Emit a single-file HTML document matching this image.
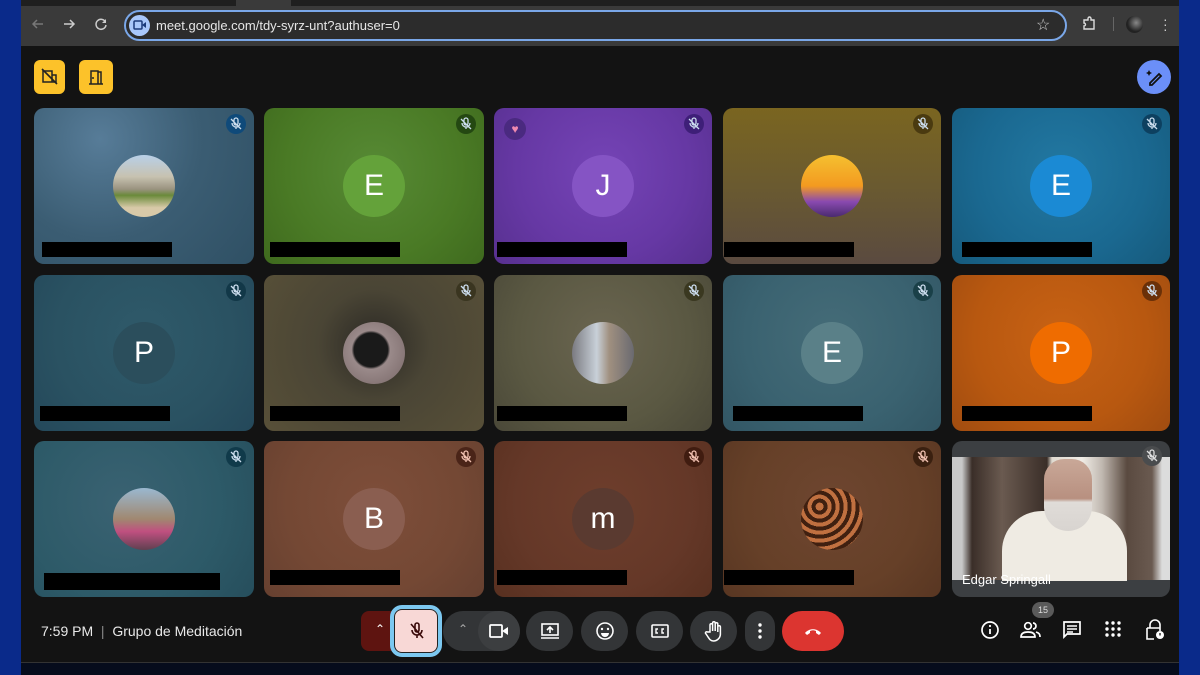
<!DOCTYPE html>
<html><head><meta charset="utf-8"><style>
*{margin:0;padding:0;box-sizing:border-box}
body{width:1200px;height:675px;background:#0a2a8a;font-family:"Liberation Sans",sans-serif;overflow:hidden;position:relative}
.win{position:absolute;left:21px;top:0;width:1158px;height:662px;background:#131313}
.chrome{position:absolute;left:0;top:0;width:1158px;height:46px;background:#3a3a3a}
.tabtop{position:absolute;top:0;height:6px;background:#1f1f1f}
.url{position:absolute;left:103px;top:10px;width:943px;height:31px;border:2px solid #7aa7e8;border-radius:16px;background:#2c2c2c}
.url span{position:absolute;left:30px;top:6px;color:#e6e6e6;font-size:13px}
.tile{position:absolute;width:220px;height:156px;border-radius:10px;overflow:hidden}
.av{position:absolute;left:79px;top:47px;width:62px;height:62px;border-radius:50%;color:#fff;font-size:30px;text-align:center;line-height:62px}
.nm{position:absolute;left:8px;top:134px;width:130px;height:15px;background:#000}
.mic{position:absolute;right:8px;top:6px;width:20px;height:20px;border-radius:50%}
.mic svg{position:absolute;left:3px;top:3px;width:14px;height:14px}
.btn{position:absolute;top:611px;height:40px;border-radius:20px;background:#333537}
.btn svg{position:absolute;left:50%;top:50%;transform:translate(-50%,-50%)}
.ri{position:absolute;top:620px}
</style></head><body>
<div class="win">
<div class="chrome">
<div class="tabtop" style="left:0;width:215px"></div>
<div class="tabtop" style="left:270px;width:888px"></div>
<svg style="position:absolute;left:10px;top:17px" width="14" height="14" viewBox="0 0 14 14"><path d="M12 7H2M6 3L2 7l4 4" stroke="#777" stroke-width="1.5" fill="none"/></svg>
<svg style="position:absolute;left:41px;top:17px" width="14" height="14" viewBox="0 0 14 14"><path d="M2 7h10M8 3l4 4-4 4" stroke="#ccc" stroke-width="1.5" fill="none"/></svg>
<svg style="position:absolute;left:73px;top:17px" width="14" height="14" viewBox="0 0 14 14"><path d="M11.5 5A5 5 0 1 0 12 8" stroke="#ccc" stroke-width="1.5" fill="none"/><path d="M12 2v4H8" fill="#ccc"/></svg>
<div class="url"><div style="position:absolute;left:3px;top:3px;width:21px;height:21px;border-radius:50%;background:#a8c7fa"></div><svg style="position:absolute;left:7px;top:8px" width="13" height="10"><rect x="1" y="1" width="8" height="8" rx="1" stroke="#1a3a7a" stroke-width="1.5" fill="none"/><path d="M9 5l4-3v6z" fill="#1a3a7a"/></svg><span>meet.google.com/tdy-syrz-unt?authuser=0</span>
<span style="left:910px;top:3px;font-size:16px;color:#ccc">☆</span></div>
<svg style="position:absolute;left:1060px;top:16px" width="16" height="16" viewBox="0 0 16 16"><path d="M3 4h4V2.5a1.5 1.5 0 0 1 3 0V4h3v9H3v-3a1.5 1.5 0 0 0 0-3z" stroke="#ddd" stroke-width="1.4" fill="none"/></svg>
<div style="position:absolute;left:1092px;top:17px;width:1px;height:14px;background:#666"></div>
<div style="position:absolute;left:1105px;top:16px;width:17px;height:17px;border-radius:50%;background:radial-gradient(circle at 60% 40%,#888,#222 60%)"></div>
<div style="position:absolute;left:1142px;top:17px;color:#ccc;font-size:14px;line-height:5px;width:4px">·<br>·<br>·</div>
</div>
<div style="position:absolute;left:13px;top:60px;width:31px;height:34px;border-radius:6px;background:#fcc22a"></div>
<svg style="position:absolute;left:20px;top:68px" width="17" height="17" viewBox="0 0 17 17"><path d="M2 3h9v11H2zM11 7h4v7h-4" stroke="#222" stroke-width="1.5" fill="none"/><path d="M1 1l15 15" stroke="#222" stroke-width="1.6"/></svg>
<div style="position:absolute;left:58px;top:60px;width:34px;height:34px;border-radius:6px;background:#fcc22a"></div>
<svg style="position:absolute;left:66px;top:68px" width="18" height="18" viewBox="0 0 18 18"><path d="M4 16V3h7v13M11 4h3v12M2 16h14M6 9v2" stroke="#222" stroke-width="1.5" fill="none"/></svg>
<div style="position:absolute;left:1116px;top:60px;width:34px;height:34px;border-radius:50%;background:#6b8ff8"></div>
<svg style="position:absolute;left:1123px;top:67px" width="20" height="20" viewBox="0 0 20 20"><path d="M6 16l9-9 2 2-9 9H6z" stroke="#111" stroke-width="1.8" fill="none"/><path d="M5 3l1 2 2 1-2 1-1 2-1-2-2-1 2-1z" fill="#111"/></svg>
</div>

<div class="tile" style="left:34px;top:108px;background:radial-gradient(circle at 30% 20%,#577c98,#3b5d73 50%,#2f5064)"><div class="av" style="background:linear-gradient(#b8d0e8 0,#c7c2b0 35%,#9a9380 55%,#6a8a3a 65%,#d8c9a8 85%)"></div><div class="nm"></div><div class="mic" style="background:#0f4a7a"><svg viewBox="0 0 14 14"><path d="M5 3a2 2 0 0 1 4 0v3a2 2 0 0 1-4 0zM3 6a4 4 0 0 0 8 0M7 10v2M2 2l10 10" stroke="#cde" stroke-width="1.3" fill="none"/></svg></div></div>
<div class="tile" style="left:264px;top:108px;background:radial-gradient(circle at 50% 40%,#578a35,#4a7a25 60%,#3f6a1e)"><div class="av" style="background:#64a23a">E</div><div class="nm" style="left:6px"></div><div class="mic" style="background:#244812"><svg viewBox="0 0 14 14"><path d="M5 3a2 2 0 0 1 4 0v3a2 2 0 0 1-4 0zM3 6a4 4 0 0 0 8 0M7 10v2M2 2l10 10" stroke="#cde" stroke-width="1.3" fill="none"/></svg></div></div>
<div class="tile" style="left:494px;top:108px;width:218px;background:radial-gradient(circle at 50% 40%,#7544b6,#6638a4 60%,#57308f)"><div class="av" style="left:78px;background:#8554c4">J</div><div class="nm" style="left:3px"></div><div class="mic" style="background:#3e1f78"><svg viewBox="0 0 14 14"><path d="M5 3a2 2 0 0 1 4 0v3a2 2 0 0 1-4 0zM3 6a4 4 0 0 0 8 0M7 10v2M2 2l10 10" stroke="#cde" stroke-width="1.3" fill="none"/></svg></div><div style="position:absolute;left:10px;top:10px;width:22px;height:22px;border-radius:50%;background:#4a2a80;color:#f08ab0;font-size:12px;text-align:center;line-height:22px">♥</div></div>
<div class="tile" style="left:723px;top:108px;width:218px;background:linear-gradient(#7a6520,#6a5a30 50%,#5a4a40)"><div class="av" style="left:78px;background:linear-gradient(#f5c030 0,#f39a20 50%,#8a4ab0 75%,#4a2a70)"></div><div class="nm" style="left:1px"></div><div class="mic" style="background:#4a3a10"><svg viewBox="0 0 14 14"><path d="M5 3a2 2 0 0 1 4 0v3a2 2 0 0 1-4 0zM3 6a4 4 0 0 0 8 0M7 10v2M2 2l10 10" stroke="#cde" stroke-width="1.3" fill="none"/></svg></div></div>
<div class="tile" style="left:952px;top:108px;width:218px;background:radial-gradient(circle at 50% 40%,#2278a2,#1a6890 60%,#165a7c)"><div class="av" style="left:78px;background:#1b8ad4">E</div><div class="nm" style="left:10px"></div><div class="mic" style="background:#0d4060"><svg viewBox="0 0 14 14"><path d="M5 3a2 2 0 0 1 4 0v3a2 2 0 0 1-4 0zM3 6a4 4 0 0 0 8 0M7 10v2M2 2l10 10" stroke="#cde" stroke-width="1.3" fill="none"/></svg></div></div>

<div class="tile" style="left:34px;top:275px;background:radial-gradient(circle at 50% 40%,#2f5a6a,#2a5262 60%,#24485a)"><div class="av" style="background:#2b4e5c">P</div><div class="nm" style="left:6px;top:131px"></div><div class="mic" style="background:#123848"><svg viewBox="0 0 14 14"><path d="M5 3a2 2 0 0 1 4 0v3a2 2 0 0 1-4 0zM3 6a4 4 0 0 0 8 0M7 10v2M2 2l10 10" stroke="#cde" stroke-width="1.3" fill="none"/></svg></div></div>
<div class="tile" style="left:264px;top:275px;background:radial-gradient(circle at 50% 45%,#2a2824,#4a4535 40%,#585038)"><div class="av" style="background:radial-gradient(circle at 45% 45%,#1a1a1a 35%,#9a8a8a 40%,#766)"></div><div class="nm" style="left:6px;top:131px"></div><div class="mic" style="background:#3a3520"><svg viewBox="0 0 14 14"><path d="M5 3a2 2 0 0 1 4 0v3a2 2 0 0 1-4 0zM3 6a4 4 0 0 0 8 0M7 10v2M2 2l10 10" stroke="#cde" stroke-width="1.3" fill="none"/></svg></div></div>
<div class="tile" style="left:494px;top:275px;width:218px;background:radial-gradient(circle at 50% 40%,#6a6550,#5a5842 60%,#4a4838)"><div class="av" style="left:78px;background:linear-gradient(90deg,#7a7a80,#c8d0d8 40%,#a09080 60%,#6a6a70)"></div><div class="nm" style="left:3px;top:131px"></div><div class="mic" style="background:#3a3820"><svg viewBox="0 0 14 14"><path d="M5 3a2 2 0 0 1 4 0v3a2 2 0 0 1-4 0zM3 6a4 4 0 0 0 8 0M7 10v2M2 2l10 10" stroke="#cde" stroke-width="1.3" fill="none"/></svg></div></div>
<div class="tile" style="left:723px;top:275px;width:218px;background:radial-gradient(circle at 50% 40%,#456c78,#3a6270 60%,#325664)"><div class="av" style="left:78px;background:#5a8088">E</div><div class="nm" style="left:10px;top:131px"></div><div class="mic" style="background:#1a4048"><svg viewBox="0 0 14 14"><path d="M5 3a2 2 0 0 1 4 0v3a2 2 0 0 1-4 0zM3 6a4 4 0 0 0 8 0M7 10v2M2 2l10 10" stroke="#cde" stroke-width="1.3" fill="none"/></svg></div></div>
<div class="tile" style="left:952px;top:275px;width:218px;background:radial-gradient(circle at 50% 40%,#c86214,#b85810 60%,#a04c10)"><div class="av" style="left:78px;background:#ef6c00">P</div><div class="nm" style="left:10px;top:131px"></div><div class="mic" style="background:#6a3008"><svg viewBox="0 0 14 14"><path d="M5 3a2 2 0 0 1 4 0v3a2 2 0 0 1-4 0zM3 6a4 4 0 0 0 8 0M7 10v2M2 2l10 10" stroke="#cde" stroke-width="1.3" fill="none"/></svg></div></div>

<div class="tile" style="left:34px;top:441px;background:radial-gradient(circle at 40% 40%,#3a6272,#2d5a68 60%,#264e5c)"><div class="av" style="background:linear-gradient(#9ab8d0,#a08870 50%,#c05080 70%,#604050)"></div><div class="nm" style="left:10px;top:132px;width:176px;height:17px"></div><div class="mic" style="background:#103a4a"><svg viewBox="0 0 14 14"><path d="M5 3a2 2 0 0 1 4 0v3a2 2 0 0 1-4 0zM3 6a4 4 0 0 0 8 0M7 10v2M2 2l10 10" stroke="#cde" stroke-width="1.3" fill="none"/></svg></div></div>
<div class="tile" style="left:264px;top:441px;background:radial-gradient(circle at 50% 40%,#7e4e3a,#744834 60%,#664030)"><div class="av" style="background:#8a5e50">B</div><div class="nm" style="left:6px;top:129px"></div><div class="mic" style="background:#4a2418"><svg viewBox="0 0 14 14"><path d="M5 3a2 2 0 0 1 4 0v3a2 2 0 0 1-4 0zM3 6a4 4 0 0 0 8 0M7 10v2M2 2l10 10" stroke="#f0c0b0" stroke-width="1.3" fill="none"/></svg></div></div>
<div class="tile" style="left:494px;top:441px;width:218px;background:radial-gradient(circle at 50% 40%,#6e3e2c,#653828 60%,#583020)"><div class="av" style="left:78px;background:#5a3a30">m</div><div class="nm" style="left:3px;top:129px"></div><div class="mic" style="background:#401c10"><svg viewBox="0 0 14 14"><path d="M5 3a2 2 0 0 1 4 0v3a2 2 0 0 1-4 0zM3 6a4 4 0 0 0 8 0M7 10v2M2 2l10 10" stroke="#f0c0b0" stroke-width="1.3" fill="none"/></svg></div></div>
<div class="tile" style="left:723px;top:441px;width:218px;background:radial-gradient(circle at 50% 40%,#6e4630,#664028 60%,#583622)"><div class="av" style="left:78px;background:repeating-radial-gradient(circle at 30% 30%,#c07040 0 4px,#402010 4px 8px)"></div><div class="nm" style="left:1px;top:129px"></div><div class="mic" style="background:#3a2010"><svg viewBox="0 0 14 14"><path d="M5 3a2 2 0 0 1 4 0v3a2 2 0 0 1-4 0zM3 6a4 4 0 0 0 8 0M7 10v2M2 2l10 10" stroke="#f0c0b0" stroke-width="1.3" fill="none"/></svg></div></div>
<div class="tile" style="left:952px;top:441px;width:218px;background:#3c3f42"><div style="position:absolute;left:0;top:16px;width:218px;height:123px;background:linear-gradient(90deg,#c8c8c8 0,#c8c8c8 10px,#3a2e28 20px,#6a5a50 50px,#3a2e28 95px,#e0dad0 100px,#f0ece6 130px,#c0b8b0 150px,#5a4a40 175px,#6a5a50 200px,#dcdcdc 210px)"></div>
<div style="position:absolute;left:50px;top:70px;width:125px;height:70px;border-radius:40px 40px 0 0;background:#efebe3"></div>
<div style="position:absolute;left:92px;top:18px;width:48px;height:72px;border-radius:22px 22px 26px 26px;background:linear-gradient(#c9a898 0,#b89080 55%,#e0dcd8 60%,#d8d4d0)"></div>
<div style="position:absolute;left:10px;top:131px;color:#fff;font-size:13px">Edgar Springall</div><div class="mic" style="background:#4a4c4e;top:5px"><svg viewBox="0 0 14 14"><path d="M5 3a2 2 0 0 1 4 0v3a2 2 0 0 1-4 0zM3 6a4 4 0 0 0 8 0M7 10v2M2 2l10 10" stroke="#ddd" stroke-width="1.3" fill="none"/></svg></div></div>

<div style="position:absolute;left:41px;top:623px;color:#e8e8e8;font-size:14px">7:59 PM &nbsp;<span style="color:#888">|</span>&nbsp; Grupo de Meditación</div>
<div style="position:absolute;left:361px;top:611px;width:50px;height:40px;border-radius:8px;background:#5e1410"></div>
<div style="position:absolute;left:375px;top:622px;color:#fff;font-size:12px">⌃</div>
<div style="position:absolute;left:390px;top:605px;width:52px;height:52px;border-radius:12px;border:4px solid #7cc8f0;background:#f8d8d6"><div style="position:absolute;inset:0;border:1.5px solid #222;border-radius:8px"></div>
<svg style="position:absolute;left:13px;top:12px" width="20" height="20" viewBox="0 0 20 20"><path d="M8 4a2 2 0 0 1 4 0v5a2 2 0 0 1-4 0zM5 9a5 5 0 0 0 10 0M10 14v3M4 3l12 14" stroke="#3a0a0a" stroke-width="1.6" fill="none"/></svg></div>
<div class="btn" style="left:443px;width:77px"></div>
<div style="position:absolute;left:458px;top:622px;color:#aaa;font-size:12px">⌃</div>
<div class="btn" style="left:478px;width:42px;background:#3c3e40"><svg width="20" height="16" viewBox="0 0 20 16"><rect x="1" y="2" width="12" height="12" rx="1" stroke="#fff" stroke-width="1.8" fill="none"/><path d="M13 8l6-4v8z" fill="#fff"/></svg></div>
<div class="btn" style="left:526px;width:47px"><svg width="20" height="18" viewBox="0 0 20 18"><rect x="2" y="2" width="16" height="11" stroke="#fff" stroke-width="1.6" fill="none"/><path d="M10 11V5M7 8l3-3 3 3M1 16h18" stroke="#fff" stroke-width="1.6" fill="none"/></svg></div>
<div class="btn" style="left:581px;width:47px"><svg width="20" height="20" viewBox="0 0 20 20"><circle cx="10" cy="10" r="8" stroke="#fff" stroke-width="1.6" fill="none"/><circle cx="7" cy="8" r="1.2" fill="#fff"/><circle cx="13" cy="8" r="1.2" fill="#fff"/><path d="M6 12a4 4 0 0 0 8 0z" fill="#fff"/></svg></div>
<div class="btn" style="left:636px;width:47px"><svg width="18" height="16" viewBox="0 0 18 16"><rect x="1" y="2" width="16" height="12" rx="1" stroke="#fff" stroke-width="1.6" fill="none"/><path d="M7 6H5v4h2M13 6h-2v4h2" stroke="#fff" stroke-width="1.4" fill="none"/></svg></div>
<div class="btn" style="left:690px;width:47px"><svg width="20" height="22" viewBox="0 0 20 22"><path d="M6 12V5a1.3 1.3 0 0 1 2.6 0v6V3a1.3 1.3 0 0 1 2.6 0v8V4a1.3 1.3 0 0 1 2.6 0v8V7a1.3 1.3 0 0 1 2.6 0v7a7 7 0 0 1-7 7c-3 0-4-2-6-5l-2-3a1.3 1.3 0 0 1 2-1z" stroke="#fff" stroke-width="1.5" fill="none"/></svg></div>
<div class="btn" style="left:745px;width:30px"><svg width="4" height="16"><circle cx="2" cy="2" r="1.7" fill="#fff"/><circle cx="2" cy="8" r="1.7" fill="#fff"/><circle cx="2" cy="14" r="1.7" fill="#fff"/></svg></div>
<div class="btn" style="left:782px;width:62px;background:#dc3530"><svg width="20" height="10" viewBox="0 0 20 10"><path d="M2 7c4-5 12-5 16 0l-2 2-3-2V5c-2-1-4-1-6 0v2l-3 2z" fill="#fff"/></svg></div>

<svg class="ri" style="left:980px" width="20" height="20" viewBox="0 0 20 20"><circle cx="10" cy="10" r="8" stroke="#fff" stroke-width="1.7" fill="none"/><path d="M10 9v5" stroke="#fff" stroke-width="1.8"/><circle cx="10" cy="6" r="1.1" fill="#fff"/></svg>
<div style="position:absolute;left:1032px;top:602px;width:22px;height:16px;border-radius:8px;background:#5a5a5a;color:#ddd;font-size:9px;text-align:center;line-height:16px">15</div>
<svg class="ri" style="left:1020px" width="22" height="20" viewBox="0 0 22 20"><circle cx="8" cy="6" r="3.3" stroke="#fff" stroke-width="1.7" fill="none"/><path d="M1 17c0-4 3-5 7-5s7 1 7 5zM13 3a3 3 0 0 1 0 6M16 12c3 1 4 2 4 5" stroke="#fff" stroke-width="1.7" fill="none"/></svg>
<svg class="ri" style="left:1062px" width="20" height="20" viewBox="0 0 20 20"><path d="M2 2h16v12H5l-3 3z" stroke="#fff" stroke-width="1.7" fill="none"/><path d="M5 6h10M5 9h10M5 12h6" stroke="#fff" stroke-width="1.5"/></svg>
<svg class="ri" style="left:1104px" width="18" height="18" viewBox="0 0 18 18"><g fill="#fff"><circle cx="3" cy="3" r="1.7"/><circle cx="9" cy="3" r="1.7"/><circle cx="15" cy="3" r="1.7"/><circle cx="3" cy="9" r="1.7"/><circle cx="9" cy="9" r="1.7"/><circle cx="15" cy="9" r="1.7"/><circle cx="3" cy="15" r="1.7"/><circle cx="9" cy="15" r="1.7"/><circle cx="15" cy="15" r="1.7"/></g></svg>
<svg class="ri" style="left:1145px;top:619px" width="20" height="22" viewBox="0 0 20 22"><path d="M5 9V6a5 5 0 0 1 10 0v3M2 9h13v3M2 9v11h7" stroke="#fff" stroke-width="1.6" fill="none"/><circle cx="15" cy="16" r="4" fill="#fff"/><path d="M15 14v2.5" stroke="#111" stroke-width="1.3"/></svg>
<div style="position:absolute;left:21px;top:662px;width:1158px;height:1px;background:#333"></div>
<div style="position:absolute;left:21px;top:663px;width:1158px;height:12px;background:#060c1c"></div>
</body></html>
